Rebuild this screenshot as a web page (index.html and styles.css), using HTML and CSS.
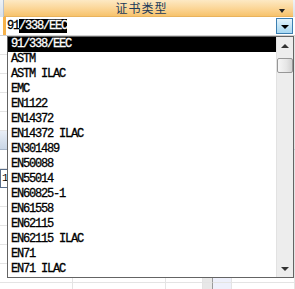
FILE: index.html
```html
<!DOCTYPE html>
<html lang="en">
<head>
  <meta charset="UTF-8" />
  <title>证书类型</title>
  <link rel="stylesheet" href="styles.css">
</head>
<body>
  <div class="sheet">
    <div class="head-row">
      <div class="stub"></div>
      <div class="col-head">
        <span class="col-title">证书类型</span>
        <span class="sort-arrow"></span>
      </div>
      <div class="stub-right"></div>
    </div>

    <div class="edit-row">
      <div class="row-mark"></div>
      <div class="combo">
        <span class="combo-text">91<span class="sel">/338/EEC</span></span>
        <span class="combo-btn"><span class="tri-down"></span></span>
      </div>
    </div>

    <!-- grid rows behind the dropdown -->
    <div class="rows">
      <div class="row"><div class="cell c1"></div><div class="cell c2"></div><div class="cell c3"></div><div class="cell c4"></div><div class="cell c5"></div><div class="cell c6"></div></div>
      <div class="row"><div class="cell c1"></div><div class="cell c2"></div><div class="cell c3"></div><div class="cell c4"></div><div class="cell c5"></div><div class="cell c6"></div></div>
      <div class="row"><div class="cell c1"></div><div class="cell c2"></div><div class="cell c3"></div><div class="cell c4"></div><div class="cell c5"></div><div class="cell c6"></div></div>
      <div class="row"><div class="cell c1"></div><div class="cell c2"></div><div class="cell c3"></div><div class="cell c4"></div><div class="cell c5"></div><div class="cell c6"></div></div>
      <div class="row"><div class="cell c1"></div><div class="cell c2"></div><div class="cell c3"></div><div class="cell c4"></div><div class="cell c5"></div><div class="cell c6"></div></div>
      <div class="row band"><div class="cell c1"></div><div class="cell c2"></div><div class="cell c3"></div><div class="cell c4"></div><div class="cell c5"></div><div class="cell c6"></div></div>
      <div class="row"><div class="cell c1"></div><div class="cell c2"></div><div class="cell c3"></div><div class="cell c4"></div><div class="cell c5"></div><div class="cell c6"></div></div>
      <div class="row"><div class="cell c1 num">1</div><div class="cell c2"></div><div class="cell c3"></div><div class="cell c4"></div><div class="cell c5"></div><div class="cell c6"></div></div>
      <div class="row"><div class="cell c1"></div><div class="cell c2"></div><div class="cell c3"></div><div class="cell c4"></div><div class="cell c5"></div><div class="cell c6"></div></div>
      <div class="row"><div class="cell c1"></div><div class="cell c2"></div><div class="cell c3"></div><div class="cell c4"></div><div class="cell c5"></div><div class="cell c6"></div></div>
      <div class="row"><div class="cell c1"></div><div class="cell c2"></div><div class="cell c3"></div><div class="cell c4"></div><div class="cell c5"></div><div class="cell c6"></div></div>
      <div class="row"><div class="cell c1"></div><div class="cell c2"></div><div class="cell c3"></div><div class="cell c4"></div><div class="cell c5"></div><div class="cell c6"></div></div>
      <div class="row"><div class="cell c1"></div><div class="cell c2"></div><div class="cell c3"></div><div class="cell c4"></div><div class="cell c5"></div><div class="cell c6"></div></div>
      <div class="row"><div class="cell c1"></div><div class="cell c2"></div><div class="cell c3"></div><div class="cell c4"></div><div class="cell c5"></div><div class="cell c6"></div></div>
    </div>
  </div>

  <!-- dropdown list -->
  <div class="dropdown">
    <ul class="options">
      <li class="active">91/338/EEC</li>
      <li>ASTM</li>
      <li>ASTM ILAC</li>
      <li>EMC</li>
      <li>EN1122</li>
      <li>EN14372</li>
      <li>EN14372 ILAC</li>
      <li>EN301489</li>
      <li>EN50088</li>
      <li>EN55014</li>
      <li>EN60825-1</li>
      <li>EN61558</li>
      <li>EN62115</li>
      <li>EN62115 ILAC</li>
      <li>EN71</li>
      <li>EN71 ILAC</li>
    </ul>
    <div class="scrollbar">
      <div class="sb-arrow"><span class="sb-up"></span></div>
      <div class="sb-track">
        <div class="sb-thumb"></div>
      </div>
      <div class="sb-arrow"><span class="sb-down"></span></div>
    </div>
  </div>
</body>
</html>
```

FILE: styles.css
```css
body {
  margin: 0;
  background: #fff;
  font-family: "Liberation Mono", "DejaVu Sans Mono", monospace;
  font-size: 12px;
  width: 295px;
  height: 289px;
  overflow: hidden;
  position: relative;
}

.sheet {
  width: 295px;
}

/* header */
.head-row {
  display: flex;
  height: 17px;
}

.stub {
  width: 3px;
  background: linear-gradient(#eef2f6, #d8e0ea);
  border-right: 1px solid #b6c2d0;
}

.stub-right {
  width: 2px;
  background: linear-gradient(#eef2f6, #d8e0ea);
}

.col-head {
  flex: 1;
  position: relative;
  display: flex;
  justify-content: center;
  align-items: center;
  background: linear-gradient(#fde9c4, #fbd595 55%, #f7c36c);
  border-bottom: 1px solid #e9b35c;
  box-sizing: border-box;
}

.col-title {
  font-family: "Noto Sans CJK SC", sans-serif;
  font-size: 12px;
  line-height: 14px;
  color: #203a5a;
  letter-spacing: 1px;
  margin-right: 14px;
}

.sort-arrow {
  position: absolute;
  right: 8px;
  top: 9px;
  width: 0;
  height: 0;
  border-left: 3px solid transparent;
  border-right: 3px solid transparent;
  border-top: 4px solid #222;
}

/* editor row */
.edit-row {
  display: flex;
  height: 19px;
  box-sizing: border-box;
  border-bottom: 1px solid #d0d0d0;
}

.row-mark {
  width: 3px;
  margin-left: 3px;
  background: #f6b24a;
}

.combo {
  flex: 1;
  display: flex;
  align-items: center;
  justify-content: space-between;
  padding: 0 2px 0 1px;
}

.combo-text {
  letter-spacing: -1.2px;
  line-height: 13px;
  color: #000;
  -webkit-text-stroke: 0.3px #000;
}

.sel {
  background: #000;
  color: #fff;
  -webkit-text-stroke: 0.3px #fff;
}

.combo-btn {
  width: 15px;
  height: 14px;
  border: 1px solid #3c7fb1;
  background: linear-gradient(#e5f4fc, #c4e5f6 50%, #a8d8f2);
  display: flex;
  align-items: center;
  justify-content: center;
}

.tri-down {
  width: 0;
  height: 0;
  border-left: 4px solid transparent;
  border-right: 4px solid transparent;
  border-top: 4px solid #000;
  margin-top: 1px;
}

/* background grid */
.row {
  display: flex;
  height: 19px;
}

.cell {
  box-sizing: border-box;
  border-right: 1px solid #e4e4e4;
  border-bottom: 1px solid #e4e4e4;
}

.c1 { width: 73px; }
.c2 { width: 93px; }
.c3 { width: 37px; }
.c4 { width: 10px; background: #e8e8e8; border-right: 1px solid #9a9a9a; }
.c5 { width: 19px; background: #eef0fb; }
.c6 { flex: 1; }

.band .cell {
  background: linear-gradient(#e8eef6, #c9d6e6);
  border-bottom: 1px solid #a8b6c8;
}

.num {
  font-size: 11px;
  padding-left: 2px;
  line-height: 18px;
  outline: 1px solid #5a6e8a;
  outline-offset: -1px;
}

/* dropdown */
.dropdown {
  position: absolute;
  left: 7px;
  top: 36px;
  width: 285px;
  height: 240px;
  border: 1px solid #646464;
  background: #fff;
  display: flex;
}

.options {
  list-style: none;
  margin: 0;
  padding: 0;
  width: 268px;
}

.options li {
  height: 15px;
  line-height: 15px;
  padding-left: 3px;
  letter-spacing: -1.2px;
  color: #000;
  white-space: pre;
  -webkit-text-stroke: 0.3px #000;
}

.options li.active {
  background: #000;
  color: #fff;
  -webkit-text-stroke: 0.3px #fff;
}

.scrollbar {
  width: 17px;
  background: #ededed;
  border-left: 1px solid #e2e2e2;
  box-sizing: border-box;
  display: flex;
  flex-direction: column;
}

.sb-arrow {
  height: 17px;
  display: flex;
  align-items: center;
  justify-content: center;
}

.sb-up {
  width: 0;
  height: 0;
  border-left: 4px solid transparent;
  border-right: 4px solid transparent;
  border-bottom: 4px solid #333;
}

.sb-down {
  width: 0;
  height: 0;
  border-left: 4px solid transparent;
  border-right: 4px solid transparent;
  border-top: 4px solid #333;
}

.sb-track {
  flex: 1;
  padding-top: 4px;
}

.sb-thumb {
  height: 15px;
  border: 1px solid #979797;
  border-radius: 2px;
  background: linear-gradient(90deg, #f6f6f6, #e6e6e6 60%, #d2d2d2);
  box-sizing: border-box;
}
```
